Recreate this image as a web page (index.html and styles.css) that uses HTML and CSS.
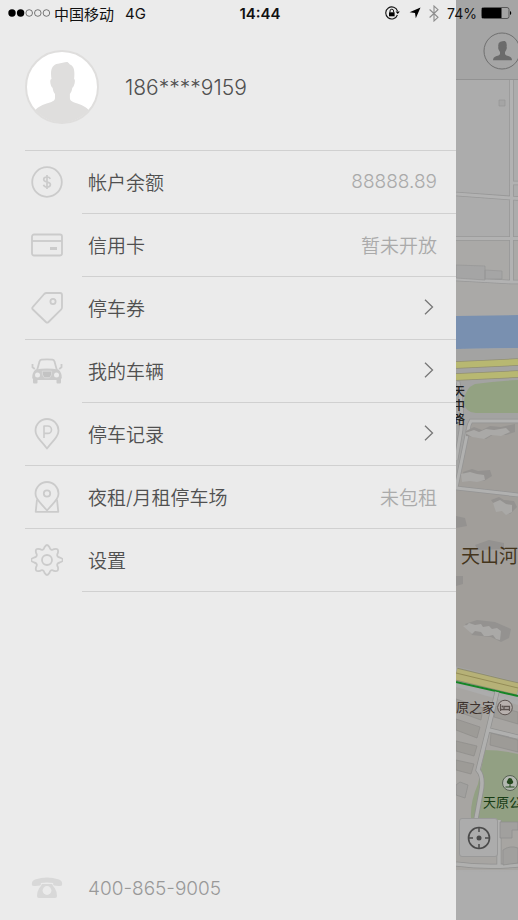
FILE: index.html
```html
<!DOCTYPE html>
<html lang="zh-CN">
<head>
<meta charset="utf-8">
<meta name="viewport" content="width=device-width, initial-scale=1">
<title>个人中心</title>
<link rel="stylesheet" href="styles.css">
</head>
<body>
<header class="status">
  <div class="status-left">
    <svg class="signal" width="43" height="10" viewBox="0 0 43 10">
      <circle cx="4" cy="5" r="3.7"/><circle cx="12.6" cy="5" r="3.7"/>
      <g fill="none" stroke="#444" stroke-width=".7"><circle cx="21.2" cy="5" r="3.3"/><circle cx="29.8" cy="5" r="3.3"/><circle cx="38.4" cy="5" r="3.3"/></g>
    </svg>
    <span>中国移动</span>
    <span class="network">4G</span>
  </div>
  <time class="clock">14:44</time>
  <div class="status-right">
    <svg width="16" height="14" viewBox="0 0 16 14">
      <path d="M12.5 5.2A6 6 0 1 0 12.4 9" fill="none" stroke="#111" stroke-width="1.1"/>
      <path d="M10.6 5.4h4.2l-2.1 2.7z"/>
      <path d="M4 6.3h5.6v4H4z"/><path d="M5 6.5V5a1.8 1.8 0 0 1 3.6 0v1.5" fill="none" stroke="#111"/>
    </svg>
    <svg class="arrow" width="12" height="12" viewBox="0 0 12 12"><path d="M11.5.5 6.8 11.2 6 6 .6 5.300z"/></svg>
    <svg width="10" height="17" viewBox="0 0 10 17"><path d="M.6 4.500 9 12.300 5 16V1l4 3.700-8.400 7.800" fill="none" stroke="#8d8d8d" stroke-width="1.1"/></svg>
    <span class="percent">74%</span>
    <svg width="31" height="12" viewBox="0 0 31 12">
      <rect x=".5" y=".5" width="27.500" height="11" rx="2" fill="none" stroke="#444" stroke-width=".8"/>
      <path d="M1 1h19.500v10H1z"/><path d="M29 4a2.200 2.200 0 0 1 0 4z"/>
    </svg>
  </div>
</header>

<main class="screen">
  <aside class="drawer">
    <section class="profile">
      <svg class="avatar" width="74" height="74" viewBox="0 0 74 74">
        <clipPath id="face"><circle cx="37" cy="37" r="35.500"/></clipPath>
        <circle cx="37" cy="37" r="36" fill="#fff"/>
        <path clip-path="url(#face)" fill="#dfdedd" d="M26.500 29C25 20 27 14.500 33 13.700c3-.4 7-1.900 9.500-1.700 1 1 2 1.700 2.400 2.600 4.300 1.700 5 6.400 4.200 14.400 1.200.2 1 4-.2 6.500-.4 1.300-1 2-1.600 2.200-.3 3-1.300 4.800-2.400 6.300v4c0 3 3 4 7.500 5.500C58 55.500 63 58 65 62v12H9V62c2-4 7-6.500 12.600-8.500C26.500 52 30 51 30 48v-4c-1.300-1.500-2-3.500-2.400-6.300-.6-.2-1.200-.9-1.600-2.200-1-2.500-1.200-6.300.5-6.500z"/>
        <circle cx="37" cy="37" r="36" fill="none" stroke="#dfdedd" stroke-width="2"/>
      </svg>
      <h1 class="account">186****9159</h1>
    </section>

    <nav>
      <ul class="menu">
        <li class="inset"><button class="row" type="button">
          <span class="icon"><svg width="32" height="32" viewBox="0 0 32 32"><circle cx="16" cy="16" r="14.800"/><path d="M19.300 12.800c-.5-1.200-1.700-1.800-3.300-1.800-2 0-3.300.9-3.300 2.400 0 3.300 6.700 1.800 6.700 5 0 1.600-1.400 2.600-3.400 2.600-1.900 0-3.100-.8-3.500-2.200M16 9v14" stroke-width="1.700"/></svg></span>
          <span class="body"><span>帐户余额</span><span class="value">88888.89</span></span>
        </button></li>
        <li class="inset"><button class="row" type="button">
          <span class="icon"><svg width="32" height="32" viewBox="0 0 32 32"><rect x="1" y="5.500" width="30" height="21" rx="2"/><path d="M1 12h30"/><path d="M19 19.500h7" stroke-width="3"/></svg></span>
          <span class="body"><span>信用卡</span><span class="value">暂未开放</span></span>
        </button></li>
        <li><button class="row" type="button">
          <span class="icon"><svg width="32" height="32" viewBox="0 0 32 32"><path d="M15.500 1H29q2 0 2 2v12.500q0 1.300-1 2.200L17.500 30q-1.300 1.300-2.600 0L1.900 17.500q-1.300-1.300 0-2.600L13.200 2Q14.200 1 15.500 1z"/><circle cx="22" cy="9.500" r="2.600"/></svg></span>
          <span class="body"><span>停车券</span><svg class="chevron" width="10" height="16" viewBox="0 0 10 16"><path d="m1 .8 7.500 7.200L1 15.200"/></svg></span>
        </button></li>
        <li class="inset"><button class="row" type="button">
          <span class="icon"><svg width="32" height="32" viewBox="0 0 32 32"><path d="M6 15.500 8.500 6.600q.4-1.600 2-1.900 5.500-.7 11 0 1.600.3 2 1.900L26 15.500M1.500 9v3.300l2.300 1.700M30.500 9v3.300l-2.300 1.700"/><path fill="#cbcbcb" stroke="none" d="M4.500 14.500Q16 12.300 27.500 14.500q3.500 3 3.300 8.500l-.8 1v3.500q0 1-1 1h-2.500q-1 0-1-1V25h-19v2.500q0 1-1 1H3q-1 0-1-1V24l-.8-1Q1 17.500 4.500 14.500z"/><circle cx="6.500" cy="20" r="2.500" fill="#ebebeb" stroke="none"/><circle cx="25.500" cy="20" r="2.500" fill="#ebebeb" stroke="none"/><path d="M11.300 16.200h9.400q.5 4-2 6.500h-5.400q-2.500-2.500-2-6.500z" fill="#c3c3c3" stroke="#e1e1e1" stroke-width=".7"/></svg></span>
          <span class="body"><span>我的车辆</span><svg class="chevron" width="10" height="16" viewBox="0 0 10 16"><path d="m1 .8 7.500 7.200L1 15.200"/></svg></span>
        </button></li>
        <li><button class="row" type="button">
          <span class="icon"><svg width="32" height="32" viewBox="0 0 32 32"><path d="M16 30.500Q13 26.500 8.800 21.800 4.500 16.800 4.500 12.500a11.500 11.500 0 0 1 23 0q0 4.300-4.300 9.300Q19 26.500 16 30.500z"/><path d="M13 20V8h3.800a3.700 3.700 0 0 1 0 7.400H13" stroke-width="1.600"/></svg></span>
          <span class="body"><span>停车记录</span><svg class="chevron" width="10" height="16" viewBox="0 0 10 16"><path d="m1 .8 7.500 7.200L1 15.200"/></svg></span>
        </button></li>
        <li><button class="row" type="button">
          <span class="icon"><svg width="32" height="32" viewBox="0 0 32 32"><path d="M16 29.500Q13 26 8.800 21.300 4.500 16.500 4.500 12.500a11.500 11.500 0 0 1 23 0q0 4-4.300 8.800Q19 26 16 29.500z"/><circle cx="16" cy="12.500" r="3.200"/><path d="M6 18.500 4.700 30.800h22.600L26 18.500"/></svg></span>
          <span class="body"><span>夜租/月租停车场</span><span class="value">未包租</span></span>
        </button></li>
        <li class="inset"><button class="row" type="button">
          <span class="icon"><svg width="32" height="32" viewBox="0 0 32 32"><circle cx="16" cy="16" r="5"/><path d="M13.500 3.200Q16-1.200 18.500 3.200c.5 2.600 2.300 3.300 4.500 1.900Q28 3.600 26.900 9c-1.400 2.200-.7 4 1.900 4.500 4.300 1.700 4.300 3.300 0 5-2.600.5-3.300 2.300-1.900 4.500Q28 28.400 23 26.900c-2.200-1.400-4-.7-4.500 1.900Q16 33.200 13.500 28.800c-.5-2.600-2.300-3.300-4.500-1.900Q3.600 28.400 5.100 23c1.400-2.200.7-4-1.900-4.500-4.300-1.700-4.300-3.300 0-5 2.600-.5 3.300-2.300 1.900-4.500Q3.600 3.600 9 5.100c2.200 1.400 4 .7 4.500-1.900z"/></svg></span>
          <span class="body"><span>设置</span></span>
        </button></li>
      </ul>
    </nav>

    <a class="hotline" href="tel:400-865-9005">
      <svg width="32" height="32" viewBox="0 0 32 32" fill="#d8d8d8"><path d="M1 13Q0 9 4 7.500q12-4 24 0Q32 9 31 13l-.5.800q-4 .5-7.500-.3l-.8-.8V11q-6.200-1.200-12.400 0v1.700l-.8.800q-3.500.8-7.500.3z"/><path d="M11 12h10q1 2.300 3 4.500 2 3.200 2 7.500 0 2-2 2H8q-2 0-2-2 0-4.300 2-7.500 2-2.200 3-4.500z"/><circle cx="16" cy="18.500" r="4.400" fill="#ebebeb"/></svg>
      <span>400-865-9005</span>
    </a>
  </aside>

  <section class="backdrop">
    <div class="topbar">
      <button class="user" type="button" aria-label="个人中心">
        <svg width="38" height="38" viewBox="0 0 38 38"><circle cx="19" cy="19" r="18" fill="none" stroke="#6f6f6f"/><path fill="#6b6b6b" d="M15.400 15q-.8-4.600 2-5.300 2.500-.8 4.500-.6 2.400 1.200 1.700 5.900.7.700-.7 3.500l-.9 1.500v2.300q1 1.500 4 2 3 1 3 4H10q0-3 3-4 3-.5 4-2V20l-.9-1.500q-1.400-2.800-.7-3.500z"/></svg>
      </button>
    </div>
    <svg class="map" viewBox="456 80 62 840" preserveAspectRatio="xMinYMin slice">
      <path fill="#acacac" d="M456 80h62v840h-62z"/>
      <path fill="#aaa9a7" d="M456 238h62v78h-62z"/>
      <g fill="none" stroke="#989898" stroke-width="4.600"><path d="M456 194l62 4.500M511.500 80v202M456 238.500h62M513 183h5M456 279l55 3h7"/></g>
      <g fill="none" stroke="#b2b2b2" stroke-width="3"><path d="M456 194l62 4.500M511.500 80v202M456 238.500h62M513 183h5M456 279l55 3h7"/></g>
      <g fill="#a5a5a5" stroke="#979797" stroke-width=".7"><path d="M499 100h6v6h-6zM456 265l29 1v14l-29-2zM485 270l17 1v8h-17z"/></g>
      <path fill="#7990b0" d="M456 316l62-1v33l-62 1z"/>
      <path fill="#a3a3a2" d="M456 349l62-1v342l-62-22z"/>
      <g fill="none" stroke="#918f73" stroke-width="7.500"><path d="M456 365l62-3M456 377l62-3"/></g>
      <g fill="none" stroke="#b8b871" stroke-width="6"><path d="M456 365l62-3M456 377l62-3"/></g>
      <path fill="#93a282" d="M475 384q20-3 43-4v33h-42q-12-1-12-12 1-13 11-17z"/>
      <path fill="#a19e9a" d="M470 422h48v260l-62-16V488z"/>
      <path d="M518 421h-47q-2 3-3 9l-12 58 62 7M458 382q5 20 3 48l-5 30" fill="none" stroke="#949494" stroke-width="4.500"/>
      <path d="M518 421h-47q-2 3-3 9l-12 58 62 7M458 382q5 20 3 48l-5 30" fill="none" stroke="#b1b1b0" stroke-width="3"/>
      <g fill="#949290"><path d="M466 431l8-4 8 3 8-4 11 1 14-3v8l-9 3-12-1-8 5-12-2-8-1zM463 472l9-3 6 2 12-1 2 6-8 5-8-1-11 1zM491 500l8-3 5 3 10 1 3 6-7 7-7-3-5-1zM456 516l9 2 2 8-11 2zM475 545l14-5 15 3v6l-26 1zM456 576h7v8l-7 2zM465 624l12-4 18 2 16 7-2 9-8 4-10-5-19-2z"/></g>
      <g fill="#aaa9a7"><path d="M465 433l9-3 5 2 7-3 8 1 12-2 4 4-9 4-10-1-7 4-12-2zM461 474l9-2 7 2 7 1 1 5-8 2-7-1-8 1zM493 503l7-3 6 4 6 1v7l-6 3-4-4-6 1zM463 626l4-1 2-2 6 2 6-1 2 3 6-1 3 3 5-1 4 3-1 9-4-1-3-4-4 1-5 0-3-4-6-1-3 3z"/></g>
      <path fill="#a7a5a2" d="M456 687l62 18v165h-62z"/>
      <path d="M456 667l62 20v14l-62-18z" fill="#aaa"/>
      <path d="M456 674l62 15" stroke="#8f8d70" stroke-width="13"/><path d="M456 674l62 15" stroke="#b6b177" stroke-width="11"/>
      <path d="M456 673l62 15" stroke="#938c57"/>
      <path d="M456 682l62 14" stroke="#158526" stroke-width="2"/>
      <g fill="#9d9b97" stroke="#8e8d8a" stroke-width=".7"><path d="M456 699l27 9-2 12-25-9zM456 719l24 8-3 11-21-8zM456 741l21 5-3 10-18-5zM456 760l18 4-3 10-15-4zM495 706l23 6v12l-24-7zM491 733l27 7v12l-28-7z"/></g>
      <path d="M485 750q16 0 33 4v71l-40-2-7-5q-1-16 7-34z" fill="#92a083"/>
      <path d="M497 692q-7 30-19 78 6 7 3 22l-5 27M489 730l29 7M456 864q30 4 62 1M499 820v45" fill="none" stroke="#919190" stroke-width="5"/>
      <path d="M497 692q-7 30-19 78 6 7 3 22l-5 27M489 730l29 7M456 864q30 4 62 1M499 820v45" fill="none" stroke="#b0b0af" stroke-width="3.500"/>
      <g fill="#a1a09e" stroke="#8e8e8d" stroke-width=".7"><path d="M460 782l8 3-3 13-9-3v-10zM500 822h18v8h-6v8h-12zM503 850q7-5 15-2v15l-15 2z"/></g>
      <path fill="#adadad" d="M456 871q30 2 62 0v49h-62z"/>
      <g class="road"><text x="453" y="396">天</text><text x="453" y="410">中</text><text x="453" y="424">路</text></g>
      <text class="district" x="461" y="563">天山河</text>
      <text class="place" x="456" y="712">原之家</text>
      <circle cx="505" cy="707.500" r="7.300" fill="#b8b1ae" stroke="#5c5350"/><path d="M500.500 704v7M500.500 709.500h9v1.500M509.500 709v-2.500h-5.500v2.500" fill="none" stroke="#5c5350" stroke-width="1.300"/><circle cx="502.500" cy="706.500" r="1" fill="#5c5350"/>
      <circle cx="510" cy="783" r="7.500" fill="#b3b8b0" stroke="#566052"/><path d="M510 778a2.600 2.600 0 0 1 2.500 2.500 2 2 0 0 1-1 3.500h-1v2.500h4v1h-9v-1h4V784h-1a2 2 0 0 1-1-3.500A2.600 2.600 0 0 1 510 778z" fill="#25481e"/>
      <text class="place park" x="483" y="807">天原公</text>
    </svg>
    <button class="locate" type="button" aria-label="定位">
      <svg width="24" height="24" viewBox="0 0 24 24"><circle cx="12" cy="12" r="10.500" fill="none" stroke="#4b4b4b" stroke-width="1.600"/><path d="M12 1v5M12 18v5M1 12h5M18 12h5" stroke="#4b4b4b" stroke-width="1.500"/><circle cx="12" cy="12" r="2.500" fill="#4b4b4b"/></svg>
    </button>
  </section>
</main>
</body>
</html>
```
FILE: styles.css
```css
* {
  box-sizing: border-box;
}

body {
  margin: 0;
  background: #ebebeb;
  color: #505050;
  font-family: Inter, "Noto Sans CJK SC", sans-serif;
  font-size: 19px;
  font-weight: 350;
}

button {
  padding: 0;
  border: 0;
  background: none;
  color: inherit;
  font: inherit;
  text-align: left;
}

svg {
  display: block;
  flex: none;
}

/* Status bar, floating over the drawer and the map */
.status {
  position: absolute;
  top: 0;
  left: 0;
  right: 0;
  z-index: 2;
  display: grid;
  grid-template-columns: 1fr auto 1fr;
  align-items: center;
  height: 26px;
  padding: 0 6px 0 8px;
  color: #111;
  font-size: 15px;
  font-weight: 400;
}

.status-left,
.status-right {
  display: flex;
  align-items: center;
  gap: 4px;
}

.status-left {
  gap: 3px;
}

.status-right {
  justify-content: flex-end;
}

.network {
  margin-left: 8px;
}

.clock {
  font-weight: 600;
}

.arrow {
  margin: 0 4px;
}

.percent {
  margin-left: 4px;
  font-size: 14px;
}

.screen {
  display: grid;
  grid-template-columns: 1fr 62px;
  min-height: 100vh;
}

.drawer {
  display: flex;
  flex-direction: column;
  background: #ebebeb;
}

.profile {
  display: flex;
  align-items: center;
  gap: 26px;
  height: 150px;
  padding: 24px 0 0 25px;
}

.account {
  margin: 0;
  font-size: 21px;
  font-weight: 350;
}

.menu {
  margin: 0 0 0 25px;
  padding: 0;
  border-top: 1px solid #d0d0d0;
  list-style: none;
}

.row {
  display: flex;
  width: 100%;
  height: 63px;
}

.icon,
.body {
  display: flex;
  align-items: center;
  border-bottom: 1px solid #d0d0d0;
}

.icon {
  width: 57px;
  padding-left: 6px;
}

.icon svg {
  fill: none;
  stroke: #cbcbcb;
  stroke-width: 1.8;
  stroke-linejoin: round;
}

.inset .icon {
  border-color: transparent;
}

.body {
  flex: 1;
  justify-content: space-between;
  padding: 0 19px 2px 6px;
}

.value {
  color: #aaa;
}

.chevron {
  margin-right: 3px;
  fill: none;
  stroke: #777;
  stroke-width: 1.3;
}

.hotline {
  display: flex;
  align-items: center;
  gap: 25px;
  height: 64px;
  margin-top: auto;
  padding-left: 31px;
  color: #999;
  text-decoration: none;
}

/* Dimmed map page behind the drawer */
.backdrop {
  position: relative;
  display: flex;
  flex-direction: column;
  overflow: hidden;
  background: #adadad;
}

.topbar {
  flex: none;
  height: 80px;
  padding: 32px 0 0 27px;
  border-bottom: 1px solid #929292;
  background: #a5a5a5;
}

.map {
  flex: 1;
  width: 100%;
  min-height: 0;
}

.road {
  fill: #222;
  font-size: 12px;
  font-weight: 500;
}

.district {
  fill: #44351c;
  font-size: 19px;
  font-weight: 400;
}

.place {
  fill: #3b302b;
  font-size: 13px;
  font-weight: 400;
}

.park {
  fill: #173c14;
}

.locate {
  position: absolute;
  bottom: 63px;
  left: 3px;
  display: grid;
  place-items: center;
  width: 39px;
  height: 39px;
  border: 1px solid #999;
  border-radius: 3px;
  background: #acacac;
}
```
